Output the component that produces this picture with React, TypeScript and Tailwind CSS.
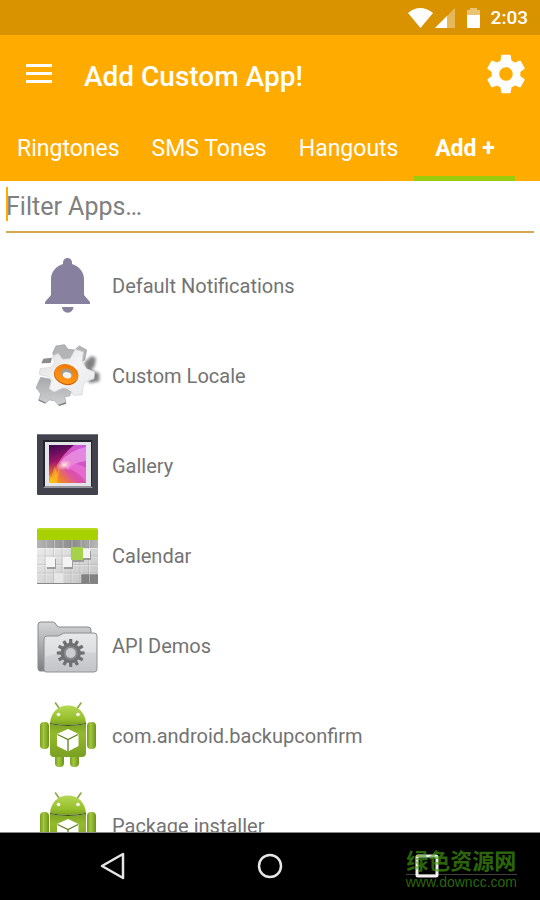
import type { ComponentType } from 'react';

// outline of a cog with straight teeth, used by the app icons
function cog(cx: number, cy: number, outer: number, inner: number, teeth: number, turn = 0) {
  const step = (Math.PI * 2) / teeth;
  const points: string[] = [];
  for (let i = 0; i < teeth; i++) {
    const a = i * step + turn;
    const corners = [
      [inner, -0.32],
      [outer, -0.21],
      [outer, 0.21],
      [inner, 0.32],
    ];
    corners.forEach(([r, k]) => {
      points.push(`${(cx + r * Math.cos(a + k * step)).toFixed(1)},${(cy + r * Math.sin(a + k * step)).toFixed(1)}`);
    });
  }
  return points.join(' ');
}

const iconClass = 'size-16 shrink-0 overflow-visible';

function BellIcon() {
  return (
    <svg viewBox="0 0 64 64" className={iconClass} aria-hidden="true">
      <path
        fill="#88809f"
        d="M27 10V8.500a4.500 4.500 0 0 1 9 0V10C43 12 48 18 48 25v16l6 7v2H9v-2l6-7V25C15 18 20 12 27 10ZM26 53h11.500a5.750 5.750 0 0 1-11.500 0Z"
      />
    </svg>
  );
}

function LocaleIcon() {
  return (
    <svg viewBox="6 6 192 192" className={iconClass} aria-hidden="true">
      <defs>
        <linearGradient id="cog-front" x1="0" y1="0" x2="1" y2="1">
          <stop offset="0" stopColor="#dcdcdc" />
          <stop offset=".5" stopColor="#f4f4f4" />
          <stop offset="1" stopColor="#e6e8ea" />
        </linearGradient>
        <linearGradient id="cog-back" x1="0" y1="0" x2="0" y2="1">
          <stop offset="0" stopColor="#a6a8aa" />
          <stop offset="1" stopColor="#cfd1d3" />
        </linearGradient>
        <linearGradient id="cog-ring" x1="0" y1="0" x2="0" y2="1">
          <stop offset="0" stopColor="#f07800" />
          <stop offset="1" stopColor="#ff9a1a" />
        </linearGradient>
        <filter id="cog-shade" x="-30%" y="-30%" width="160%" height="160%">
          <feGaussianBlur stdDeviation="4" />
        </filter>
      </defs>
      <path d="M150 62l22-20 14 6-4 24-10 12 24 10v24l-30 6Z" fill="#4d4d4d" opacity=".7" filter="url(#cog-shade)" />
      <path
        d="M56 34l10-22 26-4 10 14 20 2 14-12 22 12-6 30-54 22-26-14Z"
        fill="#b2b4b6"
        stroke="#97999b"
        strokeWidth="2"
      />
      <path d="M28 50l26-3-4 16-28 1Z" fill="#8a8c8e" />
      <path
        d="M20 106l32 6 60 38-5 12-15 2 4 18-22 8-12-14-16-2-12 10-20-10 6-18-8-12-6-6 6-14Z"
        fill="url(#cog-back)"
        stroke="#a5a7a9"
        strokeWidth="2"
        strokeLinejoin="round"
      />
      <path d="M14 174l20 9M74 190l22-7" stroke="#7c7e80" strokeWidth="4" />
      <path
        d="M55 44l17-10 14 18 22-2 16-28 24 8-4 30 14 20 24 10-2 20-22 8-10 12-4 29-26 1-10-20-22-2-26 12-14-10 6-24-8-12-28-6 2-18 32-4 12-14Z"
        fill="url(#cog-front)"
        stroke="#d6d7d9"
        strokeWidth="2"
        strokeLinejoin="round"
      />
      <g transform="rotate(16 97 97)">
        <ellipse cx="97" cy="99" rx="37" ry="30" fill="#d45f00" />
        <ellipse cx="97" cy="96" rx="36" ry="29" fill="url(#cog-ring)" />
        <ellipse cx="97" cy="94" rx="18" ry="14" fill="#a39c94" />
        <ellipse cx="100" cy="99" rx="13" ry="9" fill="#f3f3f3" />
      </g>
    </svg>
  );
}

function GalleryIcon() {
  return (
    <svg viewBox="0 0 64 64" className={iconClass} aria-hidden="true">
      <defs>
        <linearGradient id="photo" x1="0" y1="1" x2="1" y2="0">
          <stop offset="0" stopColor="#f6c000" />
          <stop offset=".2" stopColor="#f0802c" />
          <stop offset=".42" stopColor="#dc50a8" />
          <stop offset="1" stopColor="#c85ae0" />
        </linearGradient>
        <radialGradient id="photo-glow">
          <stop offset="0" stopColor="#fff3e0" />
          <stop offset="1" stopColor="#ffc0c8" stopOpacity="0" />
        </radialGradient>
        <linearGradient id="photo-dark" x1="0" y1="0" x2=".2" y2="1">
          <stop offset="0" stopColor="#3a0552" />
          <stop offset=".5" stopColor="#9c1468" />
          <stop offset="1" stopColor="#f06a20" stopOpacity=".4" />
        </linearGradient>
      </defs>
      <rect x="1" y="0" width="61" height="61" rx="1" fill="#41424c" />
      <path d="M1.500 .5h60" stroke="#777984" />
      <path d="M7 6h49v48H7Z" fill="#24242e" />
      <path d="M7 54l2-2h46l2 2Z" fill="#92939b" />
      <rect x="9" y="8" width="46" height="44" fill="#e3e3e8" />
      <rect x="13" y="11" width="37" height="38" fill="url(#photo)" />
      <path d="M24 28Q34 16 50 13v14Q38 28 32 36Z" fill="#f4a8ee" opacity=".6" />
      <path d="M31 34Q40 36 50 48V34Q40 28 32 30Z" fill="#f07ae0" opacity=".6" />
      <path d="M13 11h25Q27 20 21 31l-4 14-4-4Z" fill="url(#photo-dark)" />
      <ellipse cx="28" cy="31" rx="8" ry="5" fill="url(#photo-glow)" transform="rotate(-20 28 31)" />
      <path d="M13 49l6-17 2 8 3-8-3 17Z" fill="#ffd21e" opacity=".5" />
    </svg>
  );
}

function CalendarIcon() {
  return (
    <svg viewBox="0 0 64 64" className={iconClass} aria-hidden="true">
      <defs>
        <linearGradient id="cal-page" x1="0" y1="0" x2="1" y2="1">
          <stop offset="0" stopColor="#efefef" />
          <stop offset="1" stopColor="#c4c4c4" />
        </linearGradient>
        <linearGradient id="cal-head" x1="0" y1="0" x2="1" y2="0">
          <stop offset="0" stopColor="#b4b4b4" />
          <stop offset=".6" stopColor="#8c8c8c" />
          <stop offset="1" stopColor="#b9b9b9" />
        </linearGradient>
      </defs>
      <rect x="1" y="14" width="61" height="45" fill="url(#cal-page)" />
      <rect x="1" y="16" width="61" height="8" fill="url(#cal-head)" />
      <path d="M1 16V6q0-2 2-2h57q2 0 2 2v10Z" fill="#a9d000" />
      <path d="M2 5h59" stroke="#c4e23c" />
      <rect x="45" y="50" width="17" height="9" fill="#828282" />
      <path d="M10 16v43M18.500 16v43M27 16v43M36 16v43M45 16v43M53.500 16v43M1 24.500h61M1 33h61M1 41.500h61M1 50h61" stroke="#fff" strokeOpacity=".35" fill="none" />
      <path d="M9 16v43M17.500 16v43M26 16v43M35 16v43M44 16v43M52.500 16v43M1 32h61M1 40.500h61M1 49h61" stroke="#777" strokeOpacity=".2" fill="none" />
      <path d="M11 35h9v10h-9ZM28 35h9v10h-9ZM36 26h12v12H36ZM47 27h8v9h-8Z" fill="#555" opacity=".45" />
      <path d="M10 33h9v10h-9ZM27 33h9v10h-9ZM46 25h8v9h-8Z" fill="#f4f4f4" />
      <rect x="18" y="49" width="9" height="10" fill="#e6e6e6" />
      <rect x="35" y="23" width="12" height="13" fill="#a5d24a" />
      <path d="M1 59.500h61" stroke="#888" />
    </svg>
  );
}

function FolderIcon() {
  return (
    <svg viewBox="0 0 64 64" className={iconClass} aria-hidden="true">
      <defs>
        <linearGradient id="folder-back" x1="0" y1="0" x2="0" y2="1">
          <stop offset="0" stopColor="#d5d6d8" />
          <stop offset="1" stopColor="#7c7e80" />
        </linearGradient>
        <linearGradient id="folder-front" x1="0" y1="0" x2="0" y2="1">
          <stop offset="0" stopColor="#e0e1e3" />
          <stop offset=".5" stopColor="#d2d3d6" />
          <stop offset="1" stopColor="#c3c4c8" />
        </linearGradient>
      </defs>
      <path d="M2 54V11q0-3 3-3h11q2 0 3 1l2 3q1 1 3 1h28q3 0 3 3v41H4q-2 0-2-3Z" fill="url(#folder-back)" stroke="#88898b" />
      <path d="M8 55V25q0-3 3-3h10q2 0 3-1l2-1q1-1 3-1h29q3 0 3 3v33q0 3-3 3H10q-2 0-2-3Z" fill="url(#folder-front)" stroke="#929395" />
      <path d="M9 26q0-3 3-3h10q2 0 3-1l2-1q1-1 3-1h28q2 0 2 2v17q-30-3-51 4Z" fill="#fff" opacity=".25" />
      <polygon points={cog(34.7, 39, 14, 10, 12)} fill="#6e7072" />
      <circle cx="34.700" cy="39" r="7" fill="#85878a" />
      <circle cx="34.700" cy="39" r="5" fill="#cccdd0" />
    </svg>
  );
}

function AndroidIcon() {
  return (
    <svg viewBox="0 0 64 64" className={iconClass} aria-hidden="true">
      <defs>
        <linearGradient id="droid-limb" x1="0" y1="0" x2="1" y2="0">
          <stop offset="0" stopColor="#789c23" />
          <stop offset=".4" stopColor="#a2c93b" />
          <stop offset="1" stopColor="#6d921c" />
        </linearGradient>
        <linearGradient id="droid-head" x1="0" y1="0" x2="0" y2="1">
          <stop offset="0" stopColor="#b6d755" />
          <stop offset=".7" stopColor="#96bf2b" />
          <stop offset="1" stopColor="#7ba11f" />
        </linearGradient>
        <linearGradient id="droid-body" x1="0" y1="0" x2="0" y2="1">
          <stop offset="0" stopColor="#7da323" />
          <stop offset=".3" stopColor="#93ba2d" />
          <stop offset="1" stopColor="#7a9f22" />
        </linearGradient>
      </defs>
      <path d="M19.500-1l3.500 5M45-1l-3.500 5" stroke="#8aa645" strokeWidth="1.600" strokeLinecap="round" />
      <rect x="19" y="48" width="9" height="15" rx="4" fill="url(#droid-limb)" />
      <rect x="34" y="48" width="9" height="15" rx="4" fill="url(#droid-limb)" />
      <rect x="4" y="18" width="9" height="27" rx="4" fill="url(#droid-limb)" />
      <rect x="51" y="18" width="9" height="27" rx="4" fill="url(#droid-limb)" />
      <path d="M14 20q18 4 36 0v29q0 4-4 4H18q-4 0-4-4Z" fill="url(#droid-body)" />
      <path d="M14 19C15 8 22 1.500 32 1.500S49 8 50 19q-18 4-36 0Z" fill="url(#droid-head)" />
      <path d="M14 19.500q18 4 36 0" stroke="#39520d" strokeWidth="1.200" fill="none" />
      <circle cx="22.500" cy="10.500" r="1.800" fill="#fff" />
      <circle cx="42" cy="10.500" r="1.800" fill="#fff" />
      <path d="M32 25l10.500 5v12L32 47.500 21 42V30Z" fill="#fff" />
      <path d="M21.500 30.500L32 35.500l10-5M32 35.500v12" stroke="#5f811a" strokeWidth="1.300" fill="none" />
    </svg>
  );
}

function StatusBar() {
  return (
    <div className="flex h-[35px] shrink-0 items-center justify-end bg-[#d99200] pr-3 text-white">
      <svg viewBox="0 0 76 22" className="h-[22px] w-[76px]" fill="#fff" aria-hidden="true">
        <path d="M1 6Q13-4 26 6L13.500 21Z" />
        <path d="M48 1v20H28Z" opacity=".35" />
        <path d="M40 9v12H28Z" />
        <path d="M60 3h3V1h7v2h3v5H60Z" opacity=".45" />
        <path d="M60 8h13v12q0 1-1 1H61q-1 0-1-1Z" />
      </svg>
      <span className="ml-2 text-[19px] font-medium leading-6">2:03</span>
    </div>
  );
}

function Toolbar() {
  return (
    <div className="flex h-20 items-center pl-6 pr-3 text-white">
      <button type="button" aria-label="Open menu" className="flex w-[30px] justify-center">
        <svg viewBox="0 0 28 20" className="mb-1 h-5 w-7" fill="#fff" aria-hidden="true">
          <path d="M1 1h26v3H1ZM1 9h26v3H1ZM1 17h26v3H1Z" />
        </svg>
      </button>
      <h1 className="ml-[30px] flex-1 pt-1 text-[28px] font-medium leading-9">Add Custom App!</h1>
      <button type="button" aria-label="Settings" className="mb-0.5">
        <svg viewBox="0 0 24 24" className="-mr-px size-[46px]" fill="#fff" aria-hidden="true">
          <path d="M19.430 12.980c.04-.32.07-.64.07-.98s-.03-.66-.07-.98l2.110-1.650c.19-.15.24-.42.12-.64l-2-3.460c-.12-.22-.39-.3-.61-.22l-2.490 1c-.52-.4-1.080-.73-1.690-.98l-.38-2.650C14.460 2.180 14.250 2 14 2h-4c-.25 0-.46.18-.49.42l-.38 2.650c-.61.25-1.170.59-1.690.98l-2.490-1c-.23-.09-.49 0-.61.22l-2 3.460c-.13.22-.07.49.12.64l2.110 1.650c-.04.32-.07.65-.07.98s.03.66.07.98l-2.110 1.650c-.19.15-.24.42-.12.64l2 3.460c.12.22.39.3.61.22l2.490-1c.52.4 1.080.73 1.690.98l.38 2.650c.03.24.24.42.49.42h4c.25 0 .46-.18.49-.42l.38-2.650c.61-.25 1.170-.59 1.690-.98l2.490 1c.23.09.49 0 .61-.22l2-3.460c.12-.22.07-.49-.12-.64l-2.110-1.650zM12 15.500c-1.930 0-3.500-1.570-3.500-3.500s1.570-3.500 3.500-3.500 3.500 1.570 3.500 3.500-1.570 3.500-3.500 3.500z" />
        </svg>
      </button>
    </div>
  );
}

const tabs = ['Ringtones', 'SMS Tones', 'Hangouts', 'Add +'];

function Tabs({ active }: { active: string }) {
  return (
    <div role="tablist" className="flex h-[66px] pl-px text-[23px] leading-7 text-white">
      {tabs.map((tab) => (
        <button
          key={tab}
          type="button"
          role="tab"
          aria-selected={tab === active}
          className={
            tab === active
              ? 'min-w-[101px] border-b-[5px] border-[#99cc0d] px-4 pt-1.5 font-bold'
              : 'border-b-[5px] border-transparent px-4 pt-1.5'
          }
        >
          {tab}
        </button>
      ))}
    </div>
  );
}

function FilterBox() {
  return (
    <div className="relative shrink-0 px-1.5 pb-2">
      <input
        type="text"
        aria-label="Filter apps"
        placeholder="Filter Apps…"
        className="block h-[52px] w-full border-b-2 border-[#d8a550] bg-transparent text-[25px] leading-8 text-[#808080] outline-none placeholder:text-[#808080]"
      />
      <span className="absolute left-1.5 top-1.5 h-[34px] w-0.5 bg-[#ffab00]" />
    </div>
  );
}

const apps: { name: string; Icon: ComponentType }[] = [
  { name: 'Default Notifications', Icon: BellIcon },
  { name: 'Custom Locale', Icon: LocaleIcon },
  { name: 'Gallery', Icon: GalleryIcon },
  { name: 'Calendar', Icon: CalendarIcon },
  { name: 'API Demos', Icon: FolderIcon },
  { name: 'com.android.backupconfirm', Icon: AndroidIcon },
  { name: 'Package installer', Icon: AndroidIcon },
];

function AppList() {
  return (
    <ul className="min-h-0 flex-1 overflow-hidden">
      {apps.map(({ name, Icon }) => (
        <li key={name}>
          <button type="button" className="flex h-[90px] w-full items-center gap-3 pl-9 text-left text-xl leading-6 text-[#737373]">
            <Icon />
            <span>{name}</span>
          </button>
        </li>
      ))}
    </ul>
  );
}

function NavBar() {
  const keyClass = 'flex w-[157px] items-center justify-center pb-0.5';
  return (
    <div className="relative flex h-[68px] shrink-0 justify-center border-t border-[#888] bg-black">
      <button type="button" aria-label="Back" className={keyClass}>
        <svg viewBox="0 0 28 28" className="size-7" aria-hidden="true">
          <path d="M24 2v24L3 14Z" fill="none" stroke="#e6e6e6" strokeWidth="2.500" strokeLinejoin="round" />
        </svg>
      </button>
      <button type="button" aria-label="Home" className={keyClass}>
        <svg viewBox="0 0 28 28" className="size-7" aria-hidden="true">
          <circle cx="14" cy="14" r="11" fill="none" stroke="#e6e6e6" strokeWidth="2.500" />
        </svg>
      </button>
      <button type="button" aria-label="Recent apps" className={keyClass}>
        <svg viewBox="0 0 28 28" className="size-7" aria-hidden="true">
          <rect x="4" y="4" width="20" height="20" rx="1" fill="none" stroke="#f0f0f0" strokeWidth="3" />
        </svg>
      </button>
      <div className="pointer-events-none absolute right-[23px] top-3.5 text-center text-[#45a010]/65">
        <p className="border-b border-white/25 pb-[3px] font-['Noto_Sans_CJK_SC',sans-serif] text-[22px] font-bold leading-6">绿色资源网</p>
        <p className="font-['Liberation_Sans',sans-serif] text-[14px] leading-[14px]">www.downcc.com</p>
      </div>
    </div>
  );
}

export default function App() {
  return (
    <div className="flex h-screen flex-col bg-white font-[Roboto,sans-serif]">
      <StatusBar />
      <header className="shrink-0 bg-[#ffab00]">
        <Toolbar />
        <Tabs active="Add +" />
      </header>
      <FilterBox />
      <AppList />
      <NavBar />
    </div>
  );
}
